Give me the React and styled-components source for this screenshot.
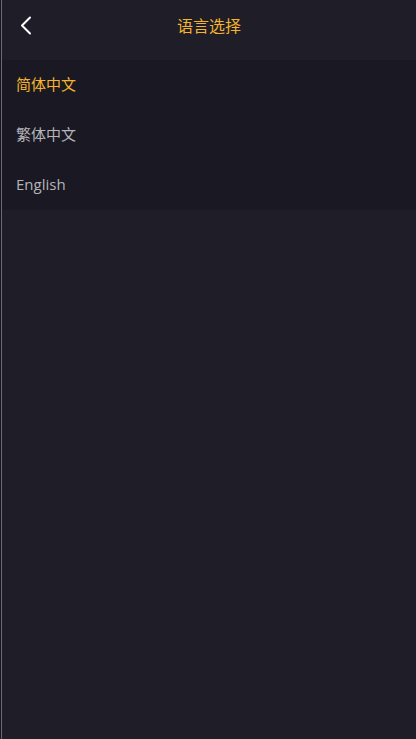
import { useState } from "react";
import styled, { createGlobalStyle } from "styled-components";

const GlobalStyle = createGlobalStyle`
  html, body {
    margin: 0;
    padding: 0;
    background: #17151d;
  }
  body {
    font-family: "Open Sans", "Noto Sans CJK SC", sans-serif;
  }
`;

const languages = [
  { key: "zh-CN", label: "简体中文" },
  { key: "zh-TW", label: "繁体中文" },
  { key: "en", label: "English" },
];

const Page = styled.div`
  margin-left: 1px;
  border-left: 1px solid #6b6972;
  min-height: 739px;
  box-sizing: border-box;
  background: #1f1d28;
  display: flex;
  flex-direction: column;
`;

const Header = styled.header`
  height: 60px;
  padding-bottom: 10px;
  box-sizing: border-box;
  display: flex;
  align-items: center;
  justify-content: center;
  position: relative;
`;

const BackButton = styled.button`
  position: absolute;
  left: 14px;
  top: 13px;
  width: 20px;
  height: 24px;
  padding: 0;
  border: none;
  background: none;
  display: flex;
  align-items: center;
  justify-content: center;
  cursor: pointer;
`;

const Title = styled.h1`
  margin: 0;
  font-size: 16px;
  font-weight: 400;
  color: #f5b42c;
`;

const List = styled.ul`
  list-style: none;
  margin: 0;
  padding: 0;
  background: #1a1822;
`;

const Item = styled.li`
  height: 50px;
  padding: 0 0 3px 14px;
  box-sizing: border-box;
  display: flex;
  align-items: center;
  font-size: 15px;
  color: ${(p) => (p.$active ? "#f5b42c" : "#b4b4bb")};
  cursor: pointer;
`;

export default function App() {
  const [lang, setLang] = useState("zh-CN");

  return (
    <>
      <GlobalStyle />
      <Page>
        <Header>
          <BackButton aria-label="back">
            <svg width="12" height="19" viewBox="0 0 12 19" fill="none">
              <path
                d="M10 1.5 L2 9.5 L10 17.5"
                stroke="#ffffff"
                strokeWidth="2"
                strokeLinecap="round"
                strokeLinejoin="round"
              />
            </svg>
          </BackButton>
          <Title>语言选择</Title>
        </Header>
        <List>
          {languages.map((l) => (
            <Item key={l.key} $active={l.key === lang} onClick={() => setLang(l.key)}>
              {l.label}
            </Item>
          ))}
        </List>
      </Page>
    </>
  );
}
